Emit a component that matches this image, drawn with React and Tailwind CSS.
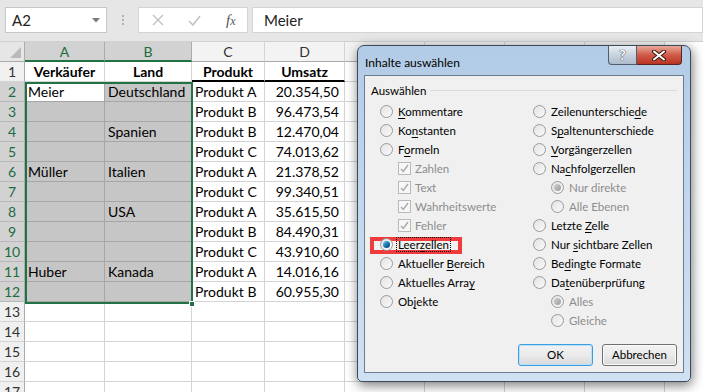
import React from 'react';

const COLS = [
  { k: 'A', w: 'w-[80px]' },
  { k: 'B', w: 'w-[87px]' },
  { k: 'C', w: 'w-[73px]' },
  { k: 'D', w: 'w-[80px]' },
  { k: 'E', w: 'w-[80px]' },
  { k: 'F', w: 'w-[80px]' },
  { k: 'G', w: 'w-[80px]' },
  { k: 'H', w: 'w-[80px]' },
];

const ROWS = [
  ['Verkäufer', 'Land', 'Produkt', 'Umsatz'],
  ['Meier', 'Deutschland', 'Produkt A', '20.354,50'],
  ['', '', 'Produkt B', '96.473,54'],
  ['', 'Spanien', 'Produkt B', '12.470,04'],
  ['', '', 'Produkt C', '74.013,62'],
  ['Müller', 'Italien', 'Produkt A', '21.378,52'],
  ['', '', 'Produkt C', '99.340,51'],
  ['', 'USA', 'Produkt A', '35.615,50'],
  ['', '', 'Produkt B', '84.490,31'],
  ['', '', 'Produkt C', '43.910,60'],
  ['Huber', 'Kanada', 'Produkt A', '14.016,16'],
  ['', '', 'Produkt B', '60.955,30'],
  [], [], [], [], [],
];

const FormulaBar = () => (
  <div className="h-[42px] bg-[#e6e6e6] border-b border-[#d0d0d0] flex items-start pt-[7px] pl-[5px]">
    <div className="w-[102px] h-[26px] bg-white border border-[#c6c6c6] flex items-center justify-between pl-[6px] pr-[6px]">
      <span className="text-[15px] text-[#222]">A2</span>
      <svg width="8" height="5" viewBox="0 0 8 5"><path d="M0 0h8L4 4.5z" fill="#7a7a7a" /></svg>
    </div>
    <div className="w-[31px] h-[26px] flex flex-col items-center justify-center gap-[2px]">
      <span className="w-[2px] h-[2px] bg-[#b0b0b0]" />
      <span className="w-[2px] h-[2px] bg-[#b0b0b0]" />
      <span className="w-[2px] h-[2px] bg-[#b0b0b0]" />
    </div>
    <div className="w-[110px] h-[26px] bg-white border border-[#d4d4d4] flex items-center pl-[13px]">
      <svg width="12" height="12" viewBox="0 0 12 12"><path d="M1 1l10 10M11 1L1 11" stroke="#c2c2c2" strokeWidth="1.4" /></svg>
      <svg className="ml-[24px]" width="13" height="11" viewBox="0 0 13 11"><path d="M1 6l4 4 7-9" stroke="#c2c2c2" strokeWidth="1.6" fill="none" /></svg>
      <span className="ml-[25px] text-[15px] italic text-[#555] font-['Liberation_Serif',serif] leading-none">
        f<span className="text-[12px]">x</span>
      </span>
    </div>
    <div className="ml-[4px] flex-1 h-[26px] bg-white border border-[#d4d4d4] flex items-center pl-[11px]">
      <span className="text-[15px] text-[#222]">Meier</span>
    </div>
  </div>
);

const ColHeader = () => (
  <div className="flex h-[20px]">
    <div className="w-[25px] shrink-0 bg-[#e6e6e6] border-r border-b border-[#ababab] relative">
      <svg className="absolute right-[3px] bottom-[3px]" width="11" height="11" viewBox="0 0 11 11"><path d="M11 0v11H0z" fill="#b9b9b9" /></svg>
    </div>
    {COLS.map((c, i) => {
      const sel = i < 2;
      return (
        <div
          key={c.k}
          className={`${c.w} shrink-0 flex items-center justify-center text-[14px] border-r ${
            sel
              ? 'bg-[#d2d2d2] text-[#1e6b40] border-[#ababab] border-b-2 border-b-[#217346]'
              : 'bg-[#f3f3f3] text-[#333] border-[#d4d4d4] border-b border-b-[#ababab]'
          }`}
        >
          {c.k}
        </div>
      );
    })}
  </div>
);

const Cell = ({ col, r, text }) => {
  const inSel = col < 2 && r >= 2 && r <= 12;
  const active = col === 0 && r === 2;
  const bold = r === 1;
  const thick = r === 1 && (col === 2 || col === 3);
  let cls = 'border-[#d4d4d4]';
  if (inSel) cls = active ? 'bg-white border-[#a6a6a6]' : 'bg-[#c6c6c6] border-[#a6a6a6]';
  const align = bold ? 'justify-center' : col === 3 ? 'justify-end pr-[5px]' : 'justify-start pl-[3px]';
  return (
    <div
      className={`${COLS[col].w} shrink-0 h-[20px] flex items-center border-r ${
        thick ? 'border-b-2 border-b-black' : 'border-b'
      } ${cls} ${align} ${bold ? 'font-bold' : ''} text-[14px] text-black whitespace-nowrap overflow-hidden`}
    >
      {text}
    </div>
  );
};

const Sheet = () => (
  <div className="relative font-['Lato',sans-serif]">
    <ColHeader />
    {ROWS.map((row, idx) => {
      const r = idx + 1;
      const sel = r >= 2 && r <= 12;
      return (
        <div key={r} className="flex h-[20px]">
          <div
            className={`w-[25px] shrink-0 flex items-center justify-center text-[14px] border-r border-r-[#ababab] border-b ${
              sel ? 'bg-[#d2d2d2] text-[#1e6b40] border-b-[#b8b8b8]' : 'bg-[#f0f0f0] text-[#333] border-b-[#d4d4d4]'
            }`}
          >
            {r}
          </div>
          {COLS.map((c, ci) => (
            <Cell key={c.k} col={ci} r={r} text={row[ci] || ''} />
          ))}
        </div>
      );
    })}
    <div className="absolute left-[25px] top-[40px] w-[168px] h-[222px] border-2 border-[#217346] pointer-events-none" />
    <div className="absolute left-[189px] top-[259px] w-[6px] h-[6px] bg-[#217346] border border-white" />
  </div>
);

const Radio = ({ checked, disabled }) => (
  <span className="w-[13px] h-[13px] shrink-0 rounded-full border border-[#9a9a9a] bg-gradient-to-br from-[#e3e3e3] to-[#fafafa] flex items-center justify-center">
    {checked && (
      <span
        className={`w-[7px] h-[7px] rounded-full ${
          disabled
            ? 'bg-gradient-to-br from-[#d0d0d0] to-[#9c9c9c]'
            : 'bg-gradient-to-br from-[#6fd0f5] via-[#1b78b2] to-[#0b3f66]'
        }`}
      />
    )}
  </span>
);

const Check = () => (
  <span className="w-[13px] h-[13px] shrink-0 border border-[#b9b9b9] bg-[#f7f7f7] flex items-center justify-center">
    <svg width="9" height="9" viewBox="0 0 9 9"><path d="M1 5l2.3 2.5L8 1" stroke="#a9a9a9" strokeWidth="1.4" fill="none" /></svg>
  </span>
);

const Label = ({ pre, u, post, disabled, focus }) => (
  <span
    className={`${disabled ? 'text-[#8d8d8d]' : 'text-black'} whitespace-nowrap ${
      focus ? 'outline outline-1 outline-dotted outline-black px-[1px] -ml-[1px]' : ''
    }`}
  >
    {pre}
    {u && <span className="underline underline-offset-[2px]">{u}</span>}
    {post}
  </span>
);

const Opt = ({ kind = 'radio', indent, checked, disabled, focus, ...l }) => (
  <div className={`relative z-10 h-[19px] flex items-center ${indent ? 'pl-[18px]' : ''}`}>
    {kind === 'check' ? <Check /> : <Radio checked={checked} disabled={disabled} />}
    <span className={kind === 'check' ? 'ml-[4px]' : 'ml-[5px]'}>
      <Label disabled={disabled} focus={focus} {...l} />
    </span>
  </div>
);

const Dialog = () => (
  <div className="absolute left-[357px] top-[45px] w-[334px] h-[337px] rounded-t-[7px] rounded-b-[5px] border border-[#3d4a5a] bg-gradient-to-b from-[#b2cbe6] via-[#c3d8ee] to-[#cfe1f3] shadow-[1px_3px_12px_rgba(0,0,0,0.55)] flex flex-col font-['Lato',sans-serif] text-[11.5px]">
    <div className="h-[29px] flex items-start">
      <span className="pl-[7px] pt-[8px] text-[12px] text-black">Inhalte auswählen</span>
      <div className="ml-auto mr-[8px] flex">
        <div className="w-[29px] h-[19px] rounded-bl-[4px] border border-t-0 border-[#4f5d6e] bg-gradient-to-b from-[#e9eef4] via-[#c8d3df] to-[#aebccc] flex items-center justify-center">
          <span className="text-[14px] font-bold text-white leading-none [text-shadow:0_0_1px_#333,0_0_1px_#333]">?</span>
        </div>
        <div className="w-[45px] h-[19px] rounded-br-[4px] border border-t-0 border-l-0 border-[#5b2222] bg-gradient-to-b from-[#e7a89a] via-[#cf5a48] to-[#b9321f] flex items-center justify-center">
          <svg width="14" height="11" viewBox="0 0 14 11">
            <path d="M2 1.5l10 8M12 1.5l-10 8" stroke="#3d1812" strokeWidth="4" strokeLinecap="round" />
            <path d="M2 1.5l10 8M12 1.5l-10 8" stroke="#fff" strokeWidth="2" strokeLinecap="round" />
          </svg>
        </div>
      </div>
    </div>
    <div className="mx-[6px] h-[298px] bg-[#f0f0f0] border border-[#6d7c8e] relative">
      <div className="absolute left-[5px] top-[161px] w-[92px] h-[17px] border-[4px] border-[#ef3b3b] pointer-events-none" />
      <div className="mt-[5px] h-[19px] flex items-center pl-[6px] pr-[6px]">
        <span>Auswählen</span>
        <span className="ml-[4px] flex-1 h-px bg-[#d5dbe0]" />
      </div>
      <div className="mt-[2px] flex pl-[15px]">
        <div className="w-[153px] flex flex-col">
          <Opt u="K" post="ommentare" />
          <Opt pre="Ko" u="n" post="stanten" />
          <Opt pre="F" u="o" post="rmeln" />
          <Opt kind="check" indent disabled pre="Zahlen" />
          <Opt kind="check" indent disabled pre="Text" />
          <Opt kind="check" indent disabled pre="Wahrheitswerte" />
          <Opt kind="check" indent disabled pre="Fehler" />
          <Opt checked focus pre="Leer" u="z" post="ellen" />
          <Opt pre="Aktueller " u="B" post="ereich" />
          <Opt pre="Aktuelles Arra" u="y" />
          <Opt pre="Ob" u="j" post="ekte" />
        </div>
        <div className="flex flex-col">
          <Opt pre="Zeilenunterschie" u="d" post="e" />
          <Opt pre="S" u="p" post="altenunterschiede" />
          <Opt u="V" post="orgängerzellen" />
          <Opt pre="Na" u="c" post="hfolgerzellen" />
          <Opt indent checked disabled pre="Nur direkte" />
          <Opt indent disabled pre="Alle Ebenen" />
          <Opt pre="Letzte " u="Z" post="elle" />
          <Opt pre="Nur " u="s" post="ichtbare Zellen" />
          <Opt pre="Be" u="d" post="ingte Formate" />
          <Opt pre="Da" u="t" post="enüberprüfung" />
          <Opt indent checked disabled pre="Alles" />
          <Opt indent disabled pre="Gleiche" />
        </div>
      </div>
      <div className="mt-[14px] flex justify-end gap-[9px] pr-[6px]">
        <button className="w-[75px] h-[22px] rounded-[3px] border border-[#3c9ee0] bg-gradient-to-b from-[#f2f2f2] via-[#ebebeb] to-[#d9d9d9] shadow-[inset_0_0_0_1px_#b8e2fa] text-black">
          OK
        </button>
        <button className="w-[75px] h-[22px] rounded-[3px] border border-[#707070] bg-gradient-to-b from-[#f2f2f2] via-[#ebebeb] to-[#d9d9d9] shadow-[inset_0_0_0_1px_#fcfcfc] text-black">
          Abbrechen
        </button>
      </div>
    </div>
  </div>
);

export default function App() {
  return (
    <div className="w-[703px] h-[392px] overflow-hidden relative bg-white font-['Lato',sans-serif]">
      <FormulaBar />
      <Sheet />
      <Dialog />
    </div>
  );
}
